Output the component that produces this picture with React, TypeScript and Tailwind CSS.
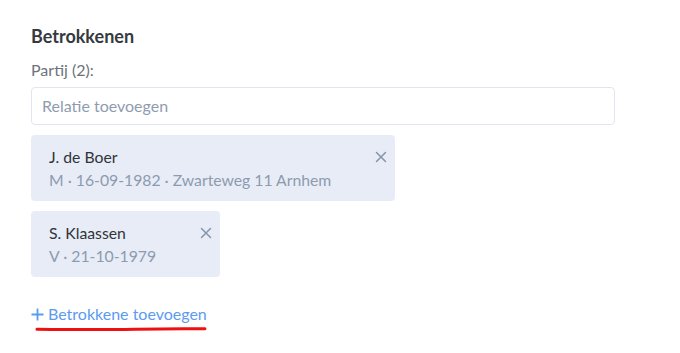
import React from "react";

function Card({ name, sub }: { name: string; sub: string }) {
  return (
    <div className="flex items-start gap-[44px] rounded-[4px] bg-[#e8ecf6] pl-[18px] pr-[8px] pt-[10px] pb-[10px]">
      <div className="flex flex-col">
        <span className="text-[15.75px] leading-[23px] text-[#2f3439]">{name}</span>
        <span className="text-[15.75px] leading-[23px] text-[#8c9bb0]">{sub}</span>
      </div>
      <svg width="12" height="12" viewBox="0 0 12 12" className="mt-[6px]">
        <path d="M1.5 1.5 L10.5 10.5 M10.5 1.5 L1.5 10.5" stroke="#8494aa" strokeWidth="1.5" strokeLinecap="round" />
      </svg>
    </div>
  );
}

export default function App() {
  return (
    <div className="h-[353px] w-[680px] bg-white pl-[31px] pt-[24px]" style={{ fontFamily: "Lato, 'Noto Sans', sans-serif" }}>
      <h2 className="text-[18px] font-bold leading-[24px] text-[#353a40]">Betrokkenen</h2>
      <div className="mt-[12px] text-[16px] leading-[20px] text-[#6d737a]">Partij (2):</div>
      <div className="mt-[7px] flex h-[38px] w-[584px] items-center rounded-[4px] border border-[#e1e6ee] pl-[10px] text-[16px] text-[#8f9cb0]">
        Relatie toevoegen
      </div>
      <div className="mt-[10px] flex flex-col items-start gap-[10px]">
        <Card name="J. de Boer" sub="M · 16-09-1982 · Zwarteweg 11 Arnhem" />
        <Card name="S. Klaassen" sub="V · 21-10-1979" />
      </div>
      <div className="mt-[26px] inline-flex flex-col">
        <div className="flex items-center gap-[4px] text-[16px] leading-[22px] text-[#5b9bf0]">
          <svg width="13" height="13" viewBox="0 0 13 13">
            <path d="M6.5 0.5 V12.5 M0.5 6.5 H12.5" stroke="#5b9bf0" strokeWidth="1.8" />
          </svg>
          <span>Betrokkene toevoegen</span>
        </div>
        <svg width="172" height="6" viewBox="0 0 172 6" className="ml-[4px] mt-[1px]">
          <path d="M2 3.2 Q60 4 100 3.2 T170 2.8" stroke="#ee1111" strokeWidth="3" fill="none" strokeLinecap="round" />
        </svg>
      </div>
    </div>
  );
}
